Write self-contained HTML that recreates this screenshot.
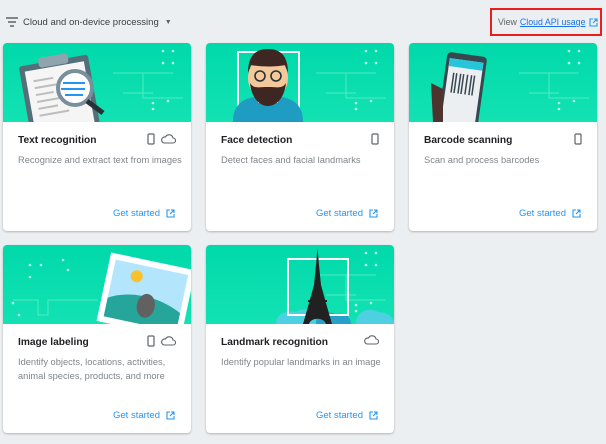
<!DOCTYPE html>
<html><head><meta charset="utf-8"><style>
*{box-sizing:border-box;margin:0;padding:0}
body{width:606px;height:444px;background:#eceff1;font-family:"Liberation Sans",sans-serif;position:relative;overflow:hidden}
.hdr{position:absolute;left:5px;top:16px;font-size:9.5px;color:#3c4043;display:flex;align-items:center;white-space:nowrap}
.red{position:absolute;left:490px;top:8px;width:112px;height:28px;border:2px solid #ea1e1e;font-size:8.8px;color:#5f6368;display:flex;align-items:center;padding-left:6px;white-space:nowrap}
.red a{color:#1a73e8;text-decoration:underline;margin-left:3px}
.card{position:absolute;width:188px;height:188px;background:#fff;border-radius:4px;box-shadow:0 1px 2px rgba(0,0,0,.25);overflow:hidden}
.ban{height:79px;background:linear-gradient(#00d9aa,#13e2b3);position:relative;overflow:hidden}
.t{position:absolute;left:15px;top:92px;font-size:10.2px;font-weight:bold;color:#202124;white-space:nowrap}
.d{position:absolute;left:15px;top:110px;font-size:9.3px;color:#80868b;line-height:14px;width:170px}
.g{position:absolute;right:16px;top:165px;font-size:9.5px;color:#2196f3;display:flex;align-items:center;gap:6px}
.ic{position:absolute;right:15px;top:90px;display:flex;gap:5px;align-items:center}
</style></head><body>
<div class="hdr"><svg width="14" height="12" viewBox="0 0 14 12"><path d="M1 2h12M3 6h8M5 10h4" stroke="#5f6368" stroke-width="1.4"/></svg><span style="margin-left:4px">Cloud and on-device processing</span><span style="margin-left:6px;font-size:7px;color:#5f6368">▼</span></div>
<div class="red">View<a>Cloud API usage</a><svg style="margin-left:4px" width="9" height="9" viewBox="0 0 9 9"><path d="M4 1H1v7h7V5M5 1h3v3M8 1L4 5" stroke="#2196f3" fill="none" stroke-width="1.1"/></svg></div>

<svg width="0" height="0" style="position:absolute"><defs>
<symbol id="ph" viewBox="0 0 8 12"><rect x="1" y="1" width="6" height="10" rx="1" fill="none" stroke="#5f6368" stroke-width="1.2"/></symbol>
<symbol id="cl" viewBox="0 0 16 10"><path d="M4 9h9a2.5 2.5 0 0 0 0-5 4 4 0 0 0-7.5-1A3 3 0 0 0 4 9z" fill="none" stroke="#5f6368" stroke-width="1.1"/></symbol>
<symbol id="ex" viewBox="0 0 9 9"><path d="M4 1H1v7h7V5M5 1h3v3M8 1L4 5" stroke="#2196f3" fill="none" stroke-width="1.1"/></symbol>
<symbol id="cir" viewBox="0 0 188 79"><g stroke="#5ff0c8" fill="none" stroke-width="1" opacity=".8"><path d="M110 30h60M120 50h30M140 30v25h40"/></g><g fill="#b9fbe6"><circle cx="160" cy="8" r="1.3"/><circle cx="170" cy="8" r="1.3"/><circle cx="160" cy="20" r="1.3"/><circle cx="170" cy="20" r="1.3"/><circle cx="150" cy="60" r="1.3"/><circle cx="150" cy="66" r="1.3"/><circle cx="165" cy="58" r="1.3"/></g></symbol>
</defs></svg>

<div class="card" style="left:3px;top:43px"><div class="ban"><svg width="188" height="79"><use href="#cir"/><g transform="rotate(-10 50 45)"><rect x="20" y="18" width="70" height="75" rx="3" fill="#546e7a"/><rect x="25" y="24" width="60" height="70" fill="#f5f5f5"/><rect x="40" y="13" width="30" height="10" rx="3" fill="#90a4ae"/><g stroke="#bdbdbd" stroke-width="2"><path d="M32 35h20M32 42h22M32 49h18M32 56h22M32 63h20M32 70h30"/></g></g><circle cx="72" cy="45" r="17" fill="#fff" stroke="#78909c" stroke-width="4"/><g stroke="#2196f3" stroke-width="2"><path d="M60 40h22M58 46h24M62 52h18"/></g><path d="M84 58l16 12" stroke="#263238" stroke-width="5"/></svg></div>
<div class="t">Text recognition</div><div class="ic"><svg width="8" height="12"><use href="#ph"/></svg><svg width="16" height="10"><use href="#cl"/></svg></div>
<div class="d">Recognize and extract text from images</div><div class="g">Get started <svg width="9" height="9"><use href="#ex"/></svg></div></div>

<div class="card" style="left:206px;top:43px"><div class="ban"><svg width="188" height="79"><use href="#cir"/><rect x="32" y="9" width="61" height="57" fill="none" stroke="#fff" stroke-width="2"/><path d="M27 79c0-18 10-26 35-26s35 8 35 26z" fill="#1e9cc2"/><rect x="52" y="50" width="20" height="10" fill="#f0c8a0"/><ellipse cx="62" cy="35" rx="20" ry="22" fill="#f5c89c"/><path d="M42 30c0-18 8-24 20-24s20 6 20 24l-3-8c-8 2-25 2-34 0z" fill="#3e2723"/><path d="M44 40c2 18 12 23 18 23s16-5 18-23c-4 6-8 4-18 4s-14 2-18-4z" fill="#3e2723"/><g fill="none" stroke="#263238" stroke-width="1.6"><circle cx="54" cy="33" r="5"/><circle cx="70" cy="33" r="5"/></g></svg></div>
<div class="t">Face detection</div><div class="ic"><svg width="8" height="12"><use href="#ph"/></svg></div>
<div class="d">Detect faces and facial landmarks</div><div class="g">Get started <svg width="9" height="9"><use href="#ex"/></svg></div></div>

<div class="card" style="left:409px;top:43px"><div class="ban"><svg width="188" height="79"><use href="#cir"/><g transform="rotate(8 45 50)"><rect x="33" y="10" width="40" height="76" rx="4" fill="#37474f"/><rect x="36" y="16" width="34" height="66" fill="#eceff1"/><rect x="36" y="16" width="34" height="8" fill="#26c6da"/><g stroke="#37474f" stroke-width="1.5"><path d="M42 30v20M45 30v20M49 30v20M52 30v20M56 30v20M60 30v20M63 30v20"/></g></g><path d="M22 40l12 6v33H24z" fill="#4e342e"/></svg></div>
<div class="t">Barcode scanning</div><div class="ic"><svg width="8" height="12"><use href="#ph"/></svg></div>
<div class="d">Scan and process barcodes</div><div class="g">Get started <svg width="9" height="9"><use href="#ex"/></svg></div></div>

<div class="card" style="left:3px;top:245px"><div class="ban"><svg width="188" height="79"><g stroke="#5ff0c8" fill="none" opacity=".8"><path d="M10 55h25v15h10v-15h50"/></g><g fill="#b9fbe6"><circle cx="27" cy="20" r="1.3"/><circle cx="38" cy="20" r="1.3"/><circle cx="27" cy="32" r="1.3"/><circle cx="60" cy="15" r="1.3"/><circle cx="65" cy="25" r="1.3"/><circle cx="10" cy="58" r="1.3"/><circle cx="16" cy="70" r="1.3"/></g><g transform="rotate(12 140 50)"><rect x="100" y="15" width="86" height="70" fill="#fff"/><rect x="106" y="21" width="74" height="58" fill="#b3e5fc"/><path d="M106 60c20-12 50-12 74 0v19h-74z" fill="#26a69a"/><circle cx="130" cy="33" r="6" fill="#fbc02d"/><ellipse cx="145" cy="60" rx="9" ry="12" fill="#616161"/></g></svg></div>
<div class="t">Image labeling</div><div class="ic"><svg width="8" height="12"><use href="#ph"/></svg><svg width="16" height="10"><use href="#cl"/></svg></div>
<div class="d">Identify objects, locations, activities, animal species, products, and more</div><div class="g">Get started <svg width="9" height="9"><use href="#ex"/></svg></div></div>

<div class="card" style="left:206px;top:245px"><div class="ban"><svg width="188" height="79"><use href="#cir"/><path d="M70 79c0-10 10-14 20-12 10-6 20 0 20 12zM150 79c0-12 12-18 22-12 8 0 16 4 16 12z" fill="#4dd0e1"/><path d="M110 79c0-10 10-14 20-10 10-2 15 4 15 10z" fill="#26a0c8"/><rect x="82" y="14" width="60" height="56" fill="none" stroke="#fff" stroke-width="2"/><path d="M111.5 3L113 20 115 40 120 58 126 79H120C118 72 105 72 103 79H97L103 58 108 40 110 20z" fill="#212121"/><path d="M102 56h19" stroke="#212121" stroke-width="2"/></svg></div>
<div class="t">Landmark recognition</div><div class="ic"><svg width="16" height="10"><use href="#cl"/></svg></div>
<div class="d">Identify popular landmarks in an image</div><div class="g">Get started <svg width="9" height="9"><use href="#ex"/></svg></div></div>
</body></html>
